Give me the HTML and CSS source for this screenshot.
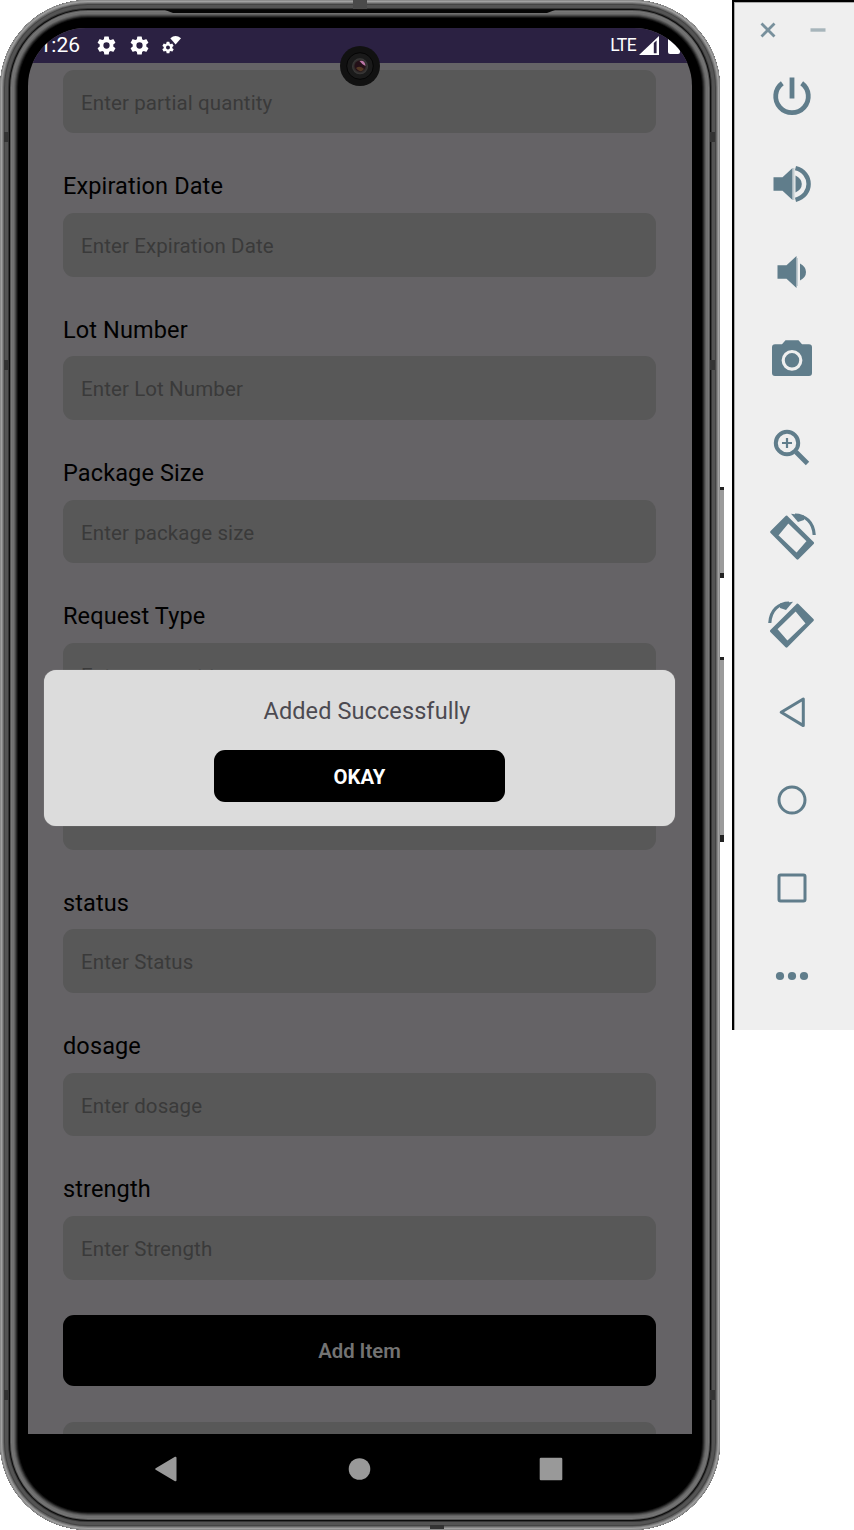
FILE: index.html
```html
<!DOCTYPE html>
<html lang="en">
<head>
<meta charset="utf-8">
<title>Emulator</title>
<link rel="stylesheet" href="styles.css">
</head>
<body>
<main class="workspace">
  <section class="phone">
    <i class="key key-power"></i><i class="key key-volume"></i>
    <i class="seam seam-top"></i><i class="seam seam-bottom"></i>
    <i class="seam seam-l1"></i><i class="seam seam-l2"></i><i class="seam seam-l3"></i>
    <i class="seam seam-r1"></i><i class="seam seam-r2"></i><i class="seam seam-r3"></i>
    <svg class="earpiece" viewBox="0 0 390 4" preserveAspectRatio="none"><path d="M0 0H390L382 3H8Z" fill="#050505"/></svg>
    <div class="screen">
      <header class="statusbar">
        <span class="clock">1:26</span>
        <svg class="gear" viewBox="2 2 20 20"><path id="gear" fill="#fff" fill-rule="evenodd" d="M19.14 12.94c.04-.3.06-.61.06-.94s-.02-.64-.07-.94l2.03-1.58a.5.5 0 0 0 .12-.61l-1.92-3.32a.49.49 0 0 0-.59-.22l-2.39.96a7 7 0 0 0-1.62-.94l-.36-2.54a.48.48 0 0 0-.48-.41h-3.84a.47.47 0 0 0-.47.41l-.36 2.54c-.59.24-1.13.57-1.62.94l-2.39-.96a.48.48 0 0 0-.59.22L2.74 8.87a.47.47 0 0 0 .12.61l2.03 1.58a7.4 7.4 0 0 0 0 1.88l-2.03 1.58a.5.5 0 0 0-.12.61l1.92 3.32c.12.22.37.29.59.22l2.39-.96c.5.38 1.03.7 1.62.94l.36 2.54c.05.24.24.41.48.41h3.84c.24 0 .44-.17.47-.41l.36-2.54c.59-.24 1.13-.56 1.62-.94l2.39.96c.22.08.47 0 .59-.22l1.92-3.32a.47.47 0 0 0-.12-.61zM12 15.3a3.3 3.3 0 1 1 0-6.6 3.3 3.3 0 0 1 0 6.6z"/></svg>
        <svg class="gear" viewBox="2 2 20 20"><use href="#gear"/></svg>
        <svg class="gear-wifi" viewBox="0 0 20 20"><g transform="translate(-1.2 5.4) scale(.6)"><use href="#gear"/></g><path d="M8.3 3.3Q13.5-1.4 19 3.3L13.6 9.6Z" fill="#fff"/></svg>
        <span class="lte">LTE</span>
        <svg class="signal" viewBox="0 0 20 19"><path fill="#fff" fill-rule="evenodd" d="M0 19L20 0V19ZM14.8 7V17.2H17.6V4.6Z"/></svg>
        <i class="battery"></i>
      </header>
      <form class="form">
        <div class="field">Enter partial quantity</div>
        <label>Expiration Date</label><div class="field">Enter Expiration Date</div>
        <label>Lot Number</label><div class="field">Enter Lot Number</div>
        <label>Package Size</label><div class="field">Enter package size</div>
        <label>Request Type</label><div class="field">Enter request type</div>
        <label></label><div class="field">Enter Name</div>
        <label>status</label><div class="field">Enter Status</div>
        <label>dosage</label><div class="field">Enter dosage</div>
        <label>strength</label><div class="field">Enter Strength</div>
        <div class="submit">Add Item</div>
        <div class="field"></div>
      </form>
      <div class="dialog"><p>Added Successfully</p><div class="okay">OKAY</div></div>
    </div>
    <nav class="navbar">
      <svg viewBox="0 0 24 26"><path d="M2.2 13L21.5 1.7V24.3Z" fill="#999" stroke="#999" stroke-width="2" stroke-linejoin="round"/></svg>
      <svg viewBox="0 0 24 26"><circle cx="12.5" cy="13" r="10.8" fill="#999"/></svg>
      <svg viewBox="0 0 24 26"><rect x=".7" y="1.7" width="22.6" height="22.6" rx="1.2" fill="#999"/></svg>
    </nav>
    <svg class="camera" viewBox="0 0 40 40">
      <defs><radialGradient id="lens"><stop offset="0" stop-color="#22131f"/><stop offset=".65" stop-color="#2a2322"/><stop offset="1" stop-color="#3c3c3c"/></radialGradient></defs>
      <circle cx="20" cy="20" r="20" fill="#111"/><circle cx="20" cy="20" r="13.3" fill="#1a1a1a" stroke="#050505"/>
      <circle cx="20" cy="20.3" r="8" fill="url(#lens)"/><circle cx="20" cy="20" r="5.4" fill="#241018"/>
      <path d="M19.5 15Q25 14 25.5 20Q22.5 19 19.5 15Z" fill="#bd78a8"/><path d="M16 22Q20 19 24 23Q20 28 16 22Z" fill="#523823"/>
    </svg>
  </section>
  <aside class="toolbar">
    <div class="window-actions">
      <svg viewBox="0 0 16 16"><path d="M1.5 1.5L14.5 14.5M14.5 1.5L1.5 14.5" stroke="#78909c" stroke-width="2.8"/></svg>
      <svg viewBox="0 0 16 16"><path d="M.5 8H15.5" stroke="#a7b5bb" stroke-width="3.4"/></svg>
    </div>
    <svg class="tool" viewBox="0 0 48 48"><path class="line" stroke-width="4.8" d="M14.3 11.3A16.3 16.3 0 1 0 33.7 11.3M24 5.5V26.5"/></svg>
    <svg class="tool" viewBox="0 0 48 48"><path class="fill" d="M5.5 17.3H14.5L24.5 8V40L14.5 30.7H5.5ZM27.5 15.5Q33.8 18.5 33.8 24T27.5 32.5Z"/><path d="M25.7 8V40" stroke="#c3cdd1" stroke-width="1.5"/><path class="line" stroke-width="4.4" d="M27.5 8.2C45 12.5 45 35.5 27.5 39.8"/></svg>
    <svg class="tool" viewBox="0 0 48 48"><path class="fill" d="M9.5 17.3H18.5L28.5 8V40L18.5 30.7H9.5ZM32 15.5Q38 18.5 38 24T32 32.5Z"/><path d="M29.5 10V38" stroke="#c3cdd1" stroke-width="1"/></svg>
    <svg class="tool" viewBox="0 1 48 48"><path class="fill" d="M7 9.2H14L17.5 5.2H30.5L34 9.2H41A3 3 0 0 1 44 12.2V38A3 3 0 0 1 41 41H7A3 3 0 0 1 4 38V12.2A3 3 0 0 1 7 9.2Z"/><circle cx="24" cy="25.3" r="8.8" fill="none" stroke="#efefef" stroke-width="3.2"/></svg>
    <svg class="tool" viewBox="0 1 48 48"><circle class="line" cx="19" cy="20" r="11.2" stroke-width="4"/><path class="line" stroke-width="2.2" d="M19 15V25M14 20H24"/><path class="line" stroke-width="4.8" d="M28 29L39.5 40.5"/></svg>
    <svg class="tool" viewBox="0 0 48 48"><g id="turn"><path class="fill" fill-rule="evenodd" stroke="#607d8b" stroke-width="2.6" stroke-linejoin="round" d="M3.5 20L18.5 4.8L44.7 31L29.5 46.3ZM8.8 23.5L28.7 42.4L40.2 29L20.2 9.6Z"/><path class="line" stroke-width="3.2" d="M27 3C37 3 45.5 10 46.2 23"/><path class="fill" d="M23 1.8L36 3.5L36 8L30 10Z"/></g></svg>
    <svg class="tool" viewBox="0 0 48 48"><use href="#turn" transform="translate(48 0) scale(-1 1)"/></svg>
    <svg class="tool" viewBox="0 0 48 48"><path class="line" stroke-width="3" stroke-linejoin="round" d="M13.2 24.3L35.3 11V37.6Z"/></svg>
    <svg class="tool" viewBox="0 0 48 48"><circle class="line" cx="24" cy="24" r="13" stroke-width="3"/></svg>
    <svg class="tool" viewBox="0 0 48 48"><rect class="line" x="11" y="11" width="26" height="26" rx="1.5" stroke-width="3"/></svg>
    <svg class="tool" viewBox="0 0 48 48"><g class="fill"><circle cx="12" cy="24" r="4.1"/><circle cx="24" cy="24" r="4.1"/><circle cx="36" cy="24" r="4.1"/></g></svg>
  </aside>
</main>
</body>
</html>
```
FILE: styles.css
```css
* { box-sizing: border-box; }
body { margin: 0; background: #fff; font-family: Roboto, "Liberation Sans", sans-serif; overflow: hidden; }
svg { display: block; flex: none; }
.workspace { display: flex; align-items: flex-start; width: 854px; height: 1530px; }

.phone {
  position: relative; flex: none; width: 720px; height: 1530px; padding: 28px 28px 0;
  border-radius: 88px; background: #000;
  box-shadow: inset 0 0 0 1px #8c8c8c, inset 0 0 0 2px #a2a2a2, inset 0 0 0 3px #858585, inset 0 0 0 4px #666,
    inset 0 0 0 5px #444, inset 0 0 0 8px #545454, inset 0 0 0 9px #353535, inset 0 0 0 10px #0c0c0c,
    inset 0 0 0 11px #555, inset 0 0 0 12px #777, inset 0 0 0 14px #707070, inset 0 0 0 15px #606060,
    inset 0 0 0 16px #484848, inset 0 0 0 17px #2c2c2c, inset 0 0 0 18px #121212;
}
.key { position: absolute; left: 720px; width: 4px; background: #9b9b9b; border-top: 3px solid #222; border-bottom: 5px solid #222; }
.key-power { top: 487px; height: 91px; }
.key-volume { top: 657px; height: 185px; border-bottom-width: 7px; }
.seam { position: absolute; width: 5px; height: 10px; background: #333; }
.seam-l1, .seam-l2, .seam-l3 { left: 4px; }
.seam-r1, .seam-r2, .seam-r3 { left: 710px; }
.seam-l1, .seam-r1 { top: 132px; }
.seam-l2, .seam-r2 { top: 360px; }
.seam-l3, .seam-r3 { top: 1390px; }
.seam-top { left: 353px; top: 0; width: 14px; height: 9px; background: #4a4a4a; }
.seam-bottom { left: 430px; top: 1525px; width: 14px; height: 4px; }
.earpiece { position: absolute; left: 165px; top: 10px; width: 390px; height: 4px; }

.screen { position: relative; height: 1406px; overflow: hidden; border-radius: 58px 58px 0 0; background: #656366; }
.statusbar { display: flex; align-items: center; height: 34.5px; padding: 0 12px 0 11.5px; background: #2b2142; color: #fff; }
.clock { width: 57.5px; font-size: 21px; }
.gear { width: 19px; height: 19px; margin-right: 13.5px; }
.gear-wifi { width: 20px; height: 20px; }
.lte { margin-left: auto; font-size: 17.5px; letter-spacing: -.6px; }
.signal { width: 20px; height: 19px; margin-left: 3px; }
.battery { width: 12px; height: 18px; margin-left: 9px; border-radius: 0 0 2px 2px; background: #fff; }

.form { padding: 7.3px 36px 0 35px; }
.field { height: 63.6px; padding-left: 18px; line-height: 67px; border-radius: 11px; background: #585858; color: #3a3a3a; font-size: 20.5px; letter-spacing: .1px; }
label { display: block; height: 79.7px; padding-top: 39px; line-height: 28px; color: #000; font-size: 23.5px; letter-spacing: .12px; }
.submit { height: 71px; margin: 35px 0 36px; border-radius: 11px; background: #000; color: #737373; font-size: 20.3px; font-weight: 600; line-height: 73px; text-align: center; }
.dialog { position: absolute; left: 16px; top: 642.3px; width: 631px; height: 156px; padding-top: 26.5px; border-radius: 12px; background: #dcdcdc; box-shadow: 0 0 1px #aaa; }
.dialog p { margin: 0 0 25px 15px; line-height: 28px; font-size: 23.5px; text-align: center; color: #4c4a51; letter-spacing: .1px; }
.okay { width: 291.5px; height: 52px; margin: 0 auto; border-radius: 11px; background: #000; color: #fff; font-size: 20.3px; font-weight: 700; line-height: 54px; text-align: center; }

.navbar { display: flex; justify-content: space-between; align-items: center; height: 70px; padding: 0 129px 0 126px; }
.navbar svg { width: 24px; height: 26px; }
.camera { position: absolute; left: 340px; top: 45.5px; width: 40px; height: 40px; }

.toolbar { display: flex; flex: none; flex-direction: column; gap: 40px; width: 122px; height: 1030px; margin-left: 12px; border-left: 2px solid #000; border-top: 2px solid #000; background: #efefef; box-shadow: inset 1px 1px #aaa; }
.window-actions { display: flex; gap: 34px; height: 30px; padding: 20px 0 0 26px; }
.window-actions svg { width: 16px; height: 16px; }
.tool { width: 48px; height: 48px; margin-left: 34px; }
.line { fill: none; stroke: #607d8b; }
.fill { fill: #607d8b; }
```
